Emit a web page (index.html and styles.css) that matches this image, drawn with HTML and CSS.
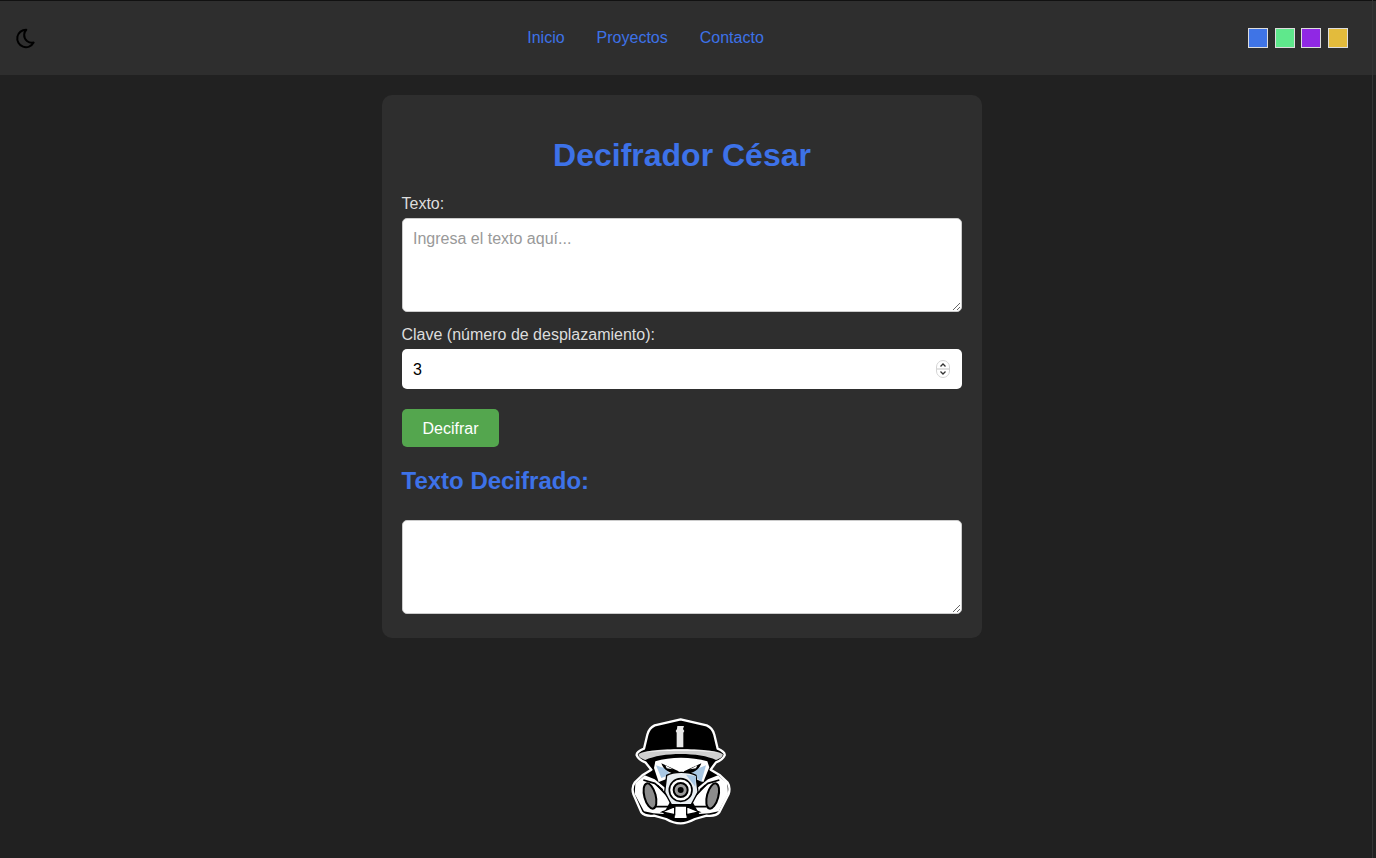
FILE: index.html
```html
<!DOCTYPE html>
<html lang="es">
<head>
  <meta charset="UTF-8" />
  <meta name="viewport" content="width=device-width, initial-scale=1.0"/>
  <title>Decifrador César</title>
  <link rel="stylesheet" href="styles.css">
</head>
<body>
  <header class="topbar">
    <svg class="moon" viewBox="0 0 24 24" width="22" height="22" fill="none" stroke="#000" stroke-width="2.2" stroke-linejoin="round">
      <path d="M14.500 3a9.500 9.500 0 1 0 8 14c-5.500 1-10.500-3-10.300-8.500.1-2.300.8-4 2.300-5.500z"/>
    </svg>
    <nav class="menu">
      <a href="#">Inicio</a>
      <a href="#">Proyectos</a>
      <a href="#">Contacto</a>
    </nav>
    <div class="swatches">
      <span class="swatch blue"></span>
      <span class="swatch green"></span>
      <span class="swatch purple"></span>
      <span class="swatch yellow"></span>
    </div>
  </header>

  <main class="page">
    <section class="card">
      <h1>Decifrador César</h1>
      <label for="texto">Texto:</label>
      <textarea id="texto" placeholder="Ingresa el texto aquí..."></textarea>
      <label for="clave">Clave (número de desplazamiento):</label>
      <div class="number-field">
        <span class="number-value">3</span>
        <svg class="spinner" viewBox="0 0 14 18" width="14" height="18">
          <rect x="0.5" y="0.5" width="13" height="17" rx="6.5" fill="#fff" stroke="#d4d4d4"/>
          <line x1="1" y1="9" x2="13" y2="9" stroke="#d9d9d9" stroke-width="1.5"/>
          <path d="M4.500 6.500 7 4l2.500 2.500M4.500 11.500 7 14l2.500-2.500" fill="none" stroke="#333" stroke-width="1.300"/>
        </svg>
      </div>
      <button type="button">Decifrar</button>
      <h2>Texto Decifrado:</h2>
      <textarea id="salida"></textarea>
    </section>

    <footer class="foot">
      <svg class="logo" viewBox="0 0 372 372" width="124" height="124">
        <!-- silhouette with the white sticker edge -->
        <path d="M182 34 260 52Q278 60 283 80L293 122Q316 132 314 142 308 156 288 163L272 185 300 202 323 224Q332 238 326 258L298 313Q288 326 260 323L225 333Q200 346 182 346 160 346 138 333L102 323Q74 326 64 313L40 258Q34 238 44 224L67 202 94 185 76 163Q56 156 50 142 48 132 72 122L82 80Q87 60 104 52Z" fill="#000" stroke="#fff" stroke-width="7" stroke-linejoin="round"/>
        <!-- cap badge -->
        <path d="M172 54h20l-3 9 4 6-3 5v44h-20V74l-3-5 4-6z" fill="#e8e8e8"/>
        <!-- brim -->
        <path d="M56 138C90 118 275 118 308 138 310 146 300 152 288 156 240 132 125 132 76 156 64 152 54 146 56 138z" fill="#cfcfcf"/>
        <path d="M70 134C110 122 255 122 294 134 250 126 115 126 70 134z" fill="#fff"/>
        <!-- face -->
        <path d="M106 160C150 146 215 146 262 160L268 178 250 222 222 212H142L116 222 102 180z" fill="#fff"/>
        <path d="M108 172 124 210 150 200 138 182zM258 172 244 222 214 196 232 182z" fill="#a9c8e4"/>
        <path d="M124 166 176 190 174 200C150 196 130 186 124 166zM244 166 192 190 194 200C218 196 238 186 244 166z" fill="#000"/>
        <path d="M136 172 158 184 140 181zM232 172 210 184 228 181z" fill="#fff"/>
        <!-- filter tubes -->
        <path d="M46 226 74 202 104 214 136 240 150 282 130 318 100 316 72 310 44 258z" fill="#fff"/>
        <path d="M322 226 294 202 264 214 232 240 218 282 238 318 268 316 296 310 324 258z" fill="#fff"/>
        <path d="M70 216 104 226 128 246 M298 216 264 226 240 246" fill="none" stroke="#000" stroke-width="5"/>
        <ellipse cx="90" cy="264" rx="17" ry="39" transform="rotate(-15 90 264)" fill="#8c8c8c" stroke="#000" stroke-width="6"/>
        <ellipse cx="278" cy="264" rx="17" ry="39" transform="rotate(15 278 264)" fill="#8c8c8c" stroke="#000" stroke-width="6"/>
        <path d="M112 232 146 268M108 296 146 296M256 232 222 268M260 296 222 296" fill="none" stroke="#000" stroke-width="5"/>
        <!-- snout -->
        <path d="M140 202C160 190 208 190 228 202L234 252 214 290H154L134 252z" fill="#e9eef2" stroke="#000" stroke-width="4"/>
        <path d="M198 200 228 204 226 236z" fill="#a9c8e4"/>
        <circle cx="182" cy="246" r="34" fill="#fff" stroke="#000" stroke-width="5"/>
        <circle cx="182" cy="246" r="21" fill="#9a9a9a" stroke="#000" stroke-width="6"/>
        <circle cx="182" cy="246" r="9" fill="#000"/>
        <!-- valve -->
        <path d="M164 294h36l2 38h-40z" fill="#fff" stroke="#000" stroke-width="4"/>
        <path d="M126 312 164 296v24zM238 312 200 296v24z" fill="#fff" stroke="#000" stroke-width="4"/>
      </svg>
    </footer>
  </main>
  <div class="edge"></div>
</body>
</html>
```

FILE: styles.css
```css
* {
  box-sizing: border-box;
}

body {
  margin: 0;
  height: 858px;
  overflow: hidden;
  background: #212121;
  font-family: "Liberation Sans", Arial, sans-serif;
  font-size: 16px;
  color: #ddd;
}

.topbar {
  display: flex;
  justify-content: space-between;
  align-items: center;
  height: 75px;
  padding: 0 28px 0 13px;
  background: #2e2e2e;
  border-top: 1px solid #111;
}

.moon {
  margin-bottom: 1px;
}

.menu {
  display: flex;
  gap: 32px;
  margin-left: 8px;
}

.menu a {
  color: #3d72e8;
  text-decoration: none;
}

.swatches {
  display: flex;
  gap: 6.67px;
}

.swatch {
  width: 20px;
  height: 20px;
  border: 1px solid #ddd;
}

.blue { background: #3f74e6; }
.green { background: #5fe88c; }
.purple { background: #9028e4; }
.yellow { background: #e3bb3c; }

.page {
  display: flex;
  flex-direction: column;
  align-items: center;
  padding: 20px 12px 0 0;
}

.card {
  display: flex;
  flex-direction: column;
  align-items: flex-start;
  width: 600px;
  height: 543px;
  padding: 20px;
  background: #2e2e2e;
  border-radius: 10px;
}

h1 {
  align-self: center;
  margin: 20px 0 20px;
  font-size: 32px;
  line-height: 40px;
  color: #3d72e8;
}

label {
  margin-bottom: 5px;
  line-height: 18px;
  margin-left: -0.5px;
}

textarea {
  display: block;
  width: 100%;
  height: 94px;
  padding: 11px 10px;
  margin-bottom: 14px;
  border: 1px solid #ccc;
  border-radius: 5px;
  background: #fff;
  font-family: inherit;
  font-size: 16px;
}

textarea::placeholder {
  color: #999;
}

.number-field {
  display: flex;
  justify-content: space-between;
  align-items: center;
  width: 100%;
  height: 40px;
  padding: 0 12px 0 11px;
  margin-bottom: 20px;
  border-radius: 5px;
  background: #fff;
  color: #000;
}

.number-value {
  padding-top: 1px;
}

button {
  width: 97px;
  height: 38px;
  padding: 1px 0 0;
  border: none;
  border-radius: 5px;
  background: #54a64e;
  color: #fff;
  font-family: inherit;
  font-size: 16px;
}

h2 {
  margin: 20px 0 25px;
  font-size: 24px;
  line-height: 28px;
  color: #3d72e8;
  margin-left: -0.5px;
}

#salida {
  margin-bottom: 0;
}

.foot {
  margin-top: 70px;
}

.logo {
  display: block;
}

.edge {
  position: fixed;
  top: 0;
  bottom: 0;
  right: 3px;
  width: 1px;
  background: #353535;
}
```
